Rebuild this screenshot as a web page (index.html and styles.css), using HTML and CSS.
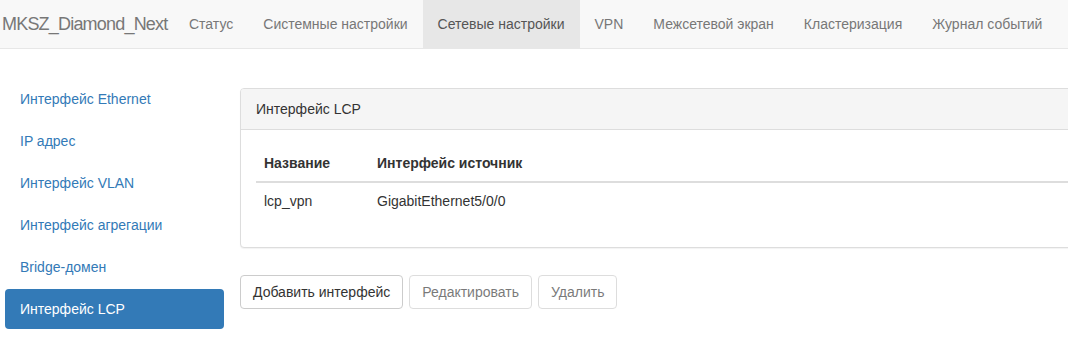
FILE: index.html
```html
<!DOCTYPE html>
<html lang="ru">
<head>
<meta charset="utf-8">
<title>MKSZ_Diamond_Next</title>
<link rel="stylesheet" href="styles.css">
</head>
<body>
<nav class="navbar">
  <a class="brand" href="#">MKSZ_Diamond_Next</a>
  <ul class="nav-menu">
    <li><a href="#">Статус</a></li>
    <li><a href="#">Системные настройки</a></li>
    <li class="active"><a href="#">Сетевые настройки</a></li>
    <li><a href="#">VPN</a></li>
    <li><a href="#">Межсетевой экран</a></li>
    <li><a href="#">Кластеризация</a></li>
    <li><a href="#">Журнал событий</a></li>
  </ul>
</nav>
<div class="layout">
  <ul class="pills">
    <li><a href="#">Интерфейс Ethernet</a></li>
    <li><a href="#">IP адрес</a></li>
    <li><a href="#">Интерфейс VLAN</a></li>
    <li><a href="#">Интерфейс агрегации</a></li>
    <li><a href="#">Bridge-домен</a></li>
    <li class="active"><a href="#">Интерфейс LCP</a></li>
  </ul>
  <main class="content">
    <section class="panel">
      <div class="panel-heading">Интерфейс LCP</div>
      <div class="panel-body">
        <table class="table">
          <thead>
            <tr><th class="col-name">Название</th><th>Интерфейс источник</th></tr>
          </thead>
          <tbody>
            <tr><td>lcp_vpn</td><td>GigabitEthernet5/0/0</td></tr>
          </tbody>
        </table>
      </div>
    </section>
    <div class="actions">
      <button class="btn" type="button">Добавить интерфейс</button>
      <button class="btn" type="button" disabled>Редактировать</button>
      <button class="btn" type="button" disabled>Удалить</button>
    </div>
  </main>
</div>
</body>
</html>
```
FILE: styles.css
```css
* { box-sizing: border-box; }
html, body { margin: 0; padding: 0; overflow: hidden; }
body {
  font-family: "Liberation Sans", Arial, sans-serif;
  font-size: 14px;
  line-height: 20px;
  color: #333;
  background: #fff;
}
a { text-decoration: none; }
ul { list-style: none; margin: 0; padding: 0; }

.navbar {
  display: flex;
  align-items: stretch;
  height: 49px;
  background: #f8f8f8;
  border-bottom: 1px solid #e7e7e7;
}
.brand {
  display: block;
  padding: 14px 0 14px 2px;
  width: 174px;
  font-size: 18px;
  line-height: 20px;
  letter-spacing: -0.8px;
  color: #777;
}
.nav-menu { display: flex; }
.nav-menu a {
  display: block;
  padding: 14px 15px;
  color: #777;
}
.nav-menu .active a {
  background: #e7e7e7;
  color: #555;
}

.layout {
  display: flex;
  align-items: flex-start;
  padding-left: 5px;
  gap: 16px;
  overflow: hidden;
}
.pills {
  width: 219px;
  flex: none;
  margin-top: 30px;
  display: flex;
  flex-direction: column;
  gap: 2px;
}
.pills a {
  display: block;
  padding: 10px 15px;
  color: #337ab7;
  border-radius: 4px;
}
.pills .active a {
  background: #337ab7;
  color: #fff;
}

.content {
  flex: none;
  width: 1000px;
  margin-top: 39px;
}
.panel {
  border: 1px solid #ddd;
  border-radius: 4px;
  background: #fff;
  box-shadow: 0 1px 1px rgba(0,0,0,.05);
}
.panel-heading {
  padding: 10px 15px;
  background: #f5f5f5;
  border-bottom: 1px solid #ddd;
  border-radius: 3px 3px 0 0;
  color: #333;
}
.panel-body { padding: 15px; }
.table {
  width: 100%;
  border-collapse: collapse;
  margin-bottom: 13px;
}
.table th, .table td {
  padding: 8px;
  text-align: left;
  vertical-align: top;
}
.table th {
  font-weight: bold;
  border-bottom: 2px solid #ddd;
}
.table .col-name { width: 113px; }

.actions {
  display: flex;
  gap: 6px;
  margin-top: 27px;
}
.btn {
  font-family: inherit;
  font-size: 14px;
  line-height: 20px;
  padding: 6px 12px;
  color: #333;
  background: #fff;
  border: 1px solid #ccc;
  border-radius: 4px;
}
.btn:disabled { opacity: .65; }
```
